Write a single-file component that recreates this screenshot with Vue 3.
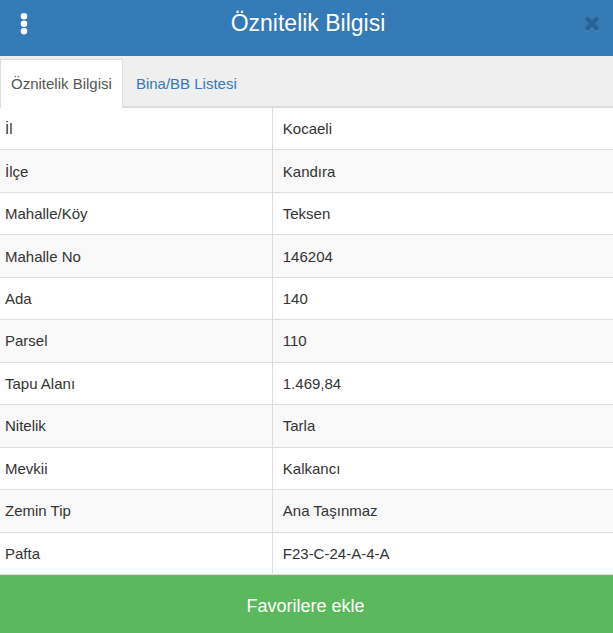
<template>
  <div class="panel">
    <header class="panel-header">
      <button class="icon-btn" type="button" aria-label="Menü">
        <svg class="dots" viewBox="0 0 8 24" aria-hidden="true">
          <circle cx="4" cy="4.2" r="3.3" />
          <circle cx="4" cy="11.7" r="3.3" />
          <circle cx="4" cy="19.2" r="3.3" />
        </svg>
      </button>
      <h1>Öznitelik Bilgisi</h1>
      <button class="icon-btn" type="button" aria-label="Kapat">
        <svg class="cross" viewBox="0 0 16 16" aria-hidden="true">
          <path class="glow" d="M3.4 4.2L12.6 13.2M12.6 4.2L3.4 13.2" />
          <path d="M3.4 3.4L12.6 12.4M12.6 3.4L3.4 12.4" />
        </svg>
      </button>
    </header>

    <nav class="tabs">
      <a
        v-for="tab in tabs"
        :key="tab.id"
        href="#"
        :class="{ active: tab.id === activeTab }"
        @click.prevent="activeTab = tab.id"
      >{{ tab.label }}</a>
    </nav>

    <table>
      <tbody>
        <tr v-for="row in rows" :key="row.label">
          <th scope="row">{{ row.label }}</th>
          <td>{{ row.value }}</td>
        </tr>
      </tbody>
    </table>

    <button class="favorite" type="button">Favorilere ekle</button>
  </div>
</template>

<script setup>
import { ref } from "vue"

const activeTab = ref("info")

const tabs = [
  { id: "info", label: "Öznitelik Bilgisi" },
  { id: "buildings", label: "Bina/BB Listesi" }
]

const rows = [
  { label: "İl", value: "Kocaeli" },
  { label: "İlçe", value: "Kandıra" },
  { label: "Mahalle/Köy", value: "Teksen" },
  { label: "Mahalle No", value: "146204" },
  { label: "Ada", value: "140" },
  { label: "Parsel", value: "110" },
  { label: "Tapu Alanı", value: "1.469,84" },
  { label: "Nitelik", value: "Tarla" },
  { label: "Mevkii", value: "Kalkancı" },
  { label: "Zemin Tip", value: "Ana Taşınmaz" },
  { label: "Pafta", value: "F23-C-24-A-4-A" }
]
</script>

<style>
body {
  margin: 0;
  background: #fff;
}
</style>

<style scoped>
.panel {
  display: flex;
  flex-direction: column;
  min-height: 100vh;
  font-family: "Liberation Sans", Arial, sans-serif;
  font-size: 15px;
  line-height: 20px;
  color: #333;
}

.panel-header {
  display: flex;
  align-items: center;
  justify-content: space-between;
  height: 46px;
  padding: 0 6px 10px 9px;
  background: #337ab7;
  color: #fff;
}

h1 {
  margin: 0;
  font-size: 23px;
  font-weight: normal;
  line-height: 32px;
}

button {
  border: none;
  font-family: inherit;
  cursor: pointer;
}

.icon-btn {
  display: flex;
  align-items: center;
  justify-content: center;
  width: 30px;
  height: 30px;
  padding: 0;
  background: none;
}

.dots {
  width: 8px;
  height: 24px;
  margin-top: 2px;
  fill: #fff;
}

.cross {
  width: 16px;
  height: 16px;
  margin-top: 2px;
  fill: none;
  stroke: #296292;
  stroke-width: 4.6;
  stroke-linecap: round;
}

.glow {
  stroke: #5b95c6;
}

.tabs {
  display: flex;
  padding-top: 3px;
  background: #efefef;
  box-shadow: inset 0 -2px #ddd;
}

.tabs a {
  padding: 14px 10px;
  border: 1px solid transparent;
  border-bottom: none;
  color: #337ab7;
  text-decoration: none;
}

.tabs a + a {
  margin-left: 2px;
}

.tabs .active {
  border-color: #ddd;
  background: #fff;
  color: #555;
}

table {
  width: 100%;
  height: 467px;
  border-spacing: 0;
  table-layout: fixed;
}

th,
td {
  padding: 1px 10px 0;
  border-bottom: 1px solid #ddd;
  text-align: left;
  font-weight: normal;
}

th {
  width: 44.5%;
  box-sizing: border-box;
  padding-left: 5px;
  border-right: 1px solid #ddd;
}

tr:nth-child(even) {
  background: #f9f9f9;
}

.favorite {
  flex: 1;
  min-height: 58px;
  padding: 4px 14px 0 12px;
  background: #5cb85c;
  color: #fff;
  font-size: 18px;
}

.favorite:hover {
  background: #449d44;
}
</style>
